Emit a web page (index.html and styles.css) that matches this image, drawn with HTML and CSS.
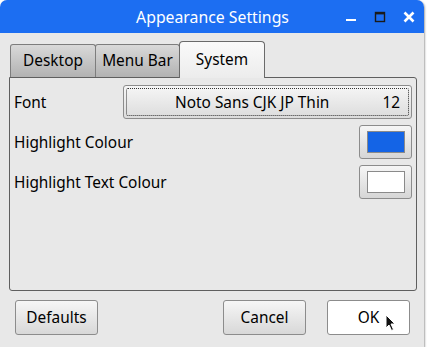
FILE: index.html
```html
<!DOCTYPE html>
<html lang="en">
<head>
    <title>Appearance Settings</title>
    <meta charset="utf-8" />
    <link rel="stylesheet" href="styles.css">
</head>
<body>
<div class="window">
    <!--标题栏-->
    <div class="titlebar">
        <span class="title">Appearance Settings</span>
        <div class="win-btns">
            <svg class="win-btn" width="14" height="14" viewBox="0 0 14 14"><rect x="2" y="9" width="10" height="2" fill="#fff"/></svg>
            <svg class="win-btn" width="14" height="14" viewBox="0 0 14 14"><rect x="2.5" y="2.5" width="9" height="9" fill="none" stroke="#1a1a1a" stroke-width="1.4"/><rect x="2" y="2" width="10" height="2.4" fill="#1a1a1a"/></svg>
            <svg class="win-btn" width="14" height="14" viewBox="0 0 14 14"><path d="M2.5 2.5 L11.5 11.5 M11.5 2.5 L2.5 11.5" stroke="#fff" stroke-width="2.6"/></svg>
        </div>
    </div>

    <div class="content">
        <div class="tabs">
            <div class="tab">Desktop</div>
            <div class="tab">Menu Bar</div>
            <div class="tab active">System</div>
        </div>
        <div class="pane">
            <div class="row">
                <span class="label">Font</span>
                <button class="font-btn"><span class="font-name">Noto Sans CJK JP Thin</span><span class="font-size">12</span></button>
            </div>
            <div class="row">
                <span class="label">Highlight Colour</span>
                <button class="colour-btn"><span class="swatch blue"></span></button>
            </div>
            <div class="row">
                <span class="label">Highlight Text Colour</span>
                <button class="colour-btn"><span class="swatch white"></span></button>
            </div>
        </div>
        <div class="buttons">
            <button class="btn">Defaults</button>
            <span class="spacer"></span>
            <button class="btn">Cancel</button>
            <button class="btn hover">OK</button>
        </div>
    </div>
    <svg class="cursor" width="12" height="18" viewBox="0 0 12 18"><path d="M1 1 L1 14 L4 11 L6.5 16.5 L8.5 15.5 L6 10 L10 10 Z" fill="#111" stroke="#fff" stroke-width="1"/></svg>
</div>
</body>
</html>
```

FILE: styles.css
```css
/*window*/
html,body{margin:0;padding:0;background:#fff;}
body{font-family:"Noto Sans",sans-serif;font-size:15.4px;color:#000;}
.window{
    position: relative;
    width:424px;
    height:347px;
    background:#e8e8e8;
    border-radius:7px 7px 0 0;
    box-shadow:1px 1px 2px rgba(0,0,0,0.35);
    overflow:hidden;
}
.titlebar{
    position: relative;
    height:33px;
    background:#1c6ef2;
    display:flex;
    align-items:center;
    justify-content:center;
}
.title{color:#fff;font-size:15.8px;margin-left:1px;}
.win-btns{
    position:absolute;
    right:8px;
    top:10px;
    display:flex;
    gap:15px;
}
.win-btn{display:block;}

.content{padding:8px 7px 0 9px;}
.tabs{display:flex;align-items:flex-end;height:36px;padding-left:1px;position:relative;z-index:1;}
.tab{
    height:33px;
    box-sizing:border-box;
    padding:0;
    text-align:center;
    white-space:nowrap;
    line-height:31px;
    border:1px solid #7d7d7d;
    border-bottom:none;
    border-radius:3px 3px 0 0;
    background:linear-gradient(#d9d9d9,#b2b2b2);
    margin-right:-1px;
}
.tab:nth-child(1){width:86px;}
.tab:nth-child(2){width:85px;}
.tab.active{
    width:86px;
    height:37px;
    margin-bottom:-1px;
    line-height:36px;
    background:linear-gradient(#fafafa,#ececec);
    border-color:#6a6a6a;
    border-radius:4px 4px 0 0;
}
.pane{
    height:214px;
    box-sizing:border-box;
    border:1px solid #5f5f5f;
    border-radius:0 3px 3px 3px;
    padding:7px 4px 0 4px;
    display:flex;
    flex-direction:column;
    gap:6px;
}
.row{display:flex;align-items:center;justify-content:space-between;height:34px;}
.label{padding-top:1px;}
button{font-family:inherit;font-size:15.4px;color:#000;}
.font-btn{
    width:289px;
    height:34px;
    border:1px solid #8c8c8c;
    border-radius:3px;
    background:linear-gradient(#f6f6f6,#dcdcdc);
    display:flex;
    align-items:center;
    padding:0 11px 0 0;
    position:relative;
}
.font-btn::after{
    content:"";
    position:absolute;
    left:2px;top:2px;right:2px;bottom:2px;
    border:1px dotted #333;
    border-radius:2px;
}
.font-name{flex:1;text-align:center;margin-right:2px;}
.colour-btn{
    width:53px;
    height:34px;
    border:1px solid #8c8c8c;
    border-radius:3px;
    background:linear-gradient(#f6f6f6,#d6d6d6);
    padding:0;
    display:flex;
    align-items:center;
    justify-content:center;
}
.swatch{display:block;width:36px;height:20px;border:1px solid #8a8a8a;}
.swatch.blue{background:#1464e6;}
.swatch.white{background:#fff;}

.buttons{display:flex;gap:21px;padding:9px 0 0 6px;}
.spacer{flex:1;}
.btn{
    width:83px;
    height:35px;
    border:1px solid #8c8c8c;
    border-radius:3px;
    background:linear-gradient(#f6f6f6,#d8d8d8);
    padding:0;
}
.btn.hover{background:#fff;margin-right:7px;}
.cursor{position:absolute;left:385px;top:314px;}
```
